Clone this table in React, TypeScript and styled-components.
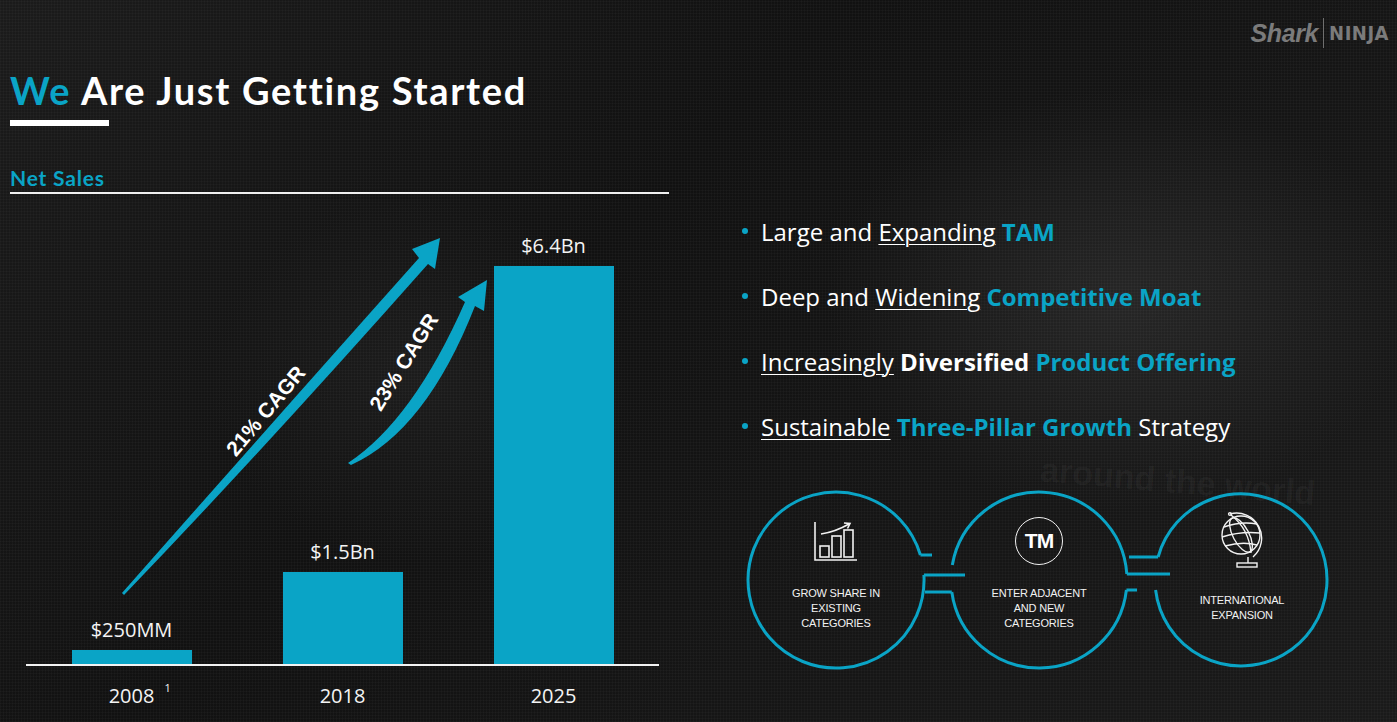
import React from "react";
import styled, { createGlobalStyle } from "styled-components";

const TEAL = "#0aa4c6";

const GlobalStyle = createGlobalStyle`
  html, body {
    margin: 0;
    padding: 0;
    background: #121212;
  }
  * {
    box-sizing: border-box;
  }
`;

const bars = [
  { year: "2008", label: "$250MM", height: 14, note: "1" },
  { year: "2018", label: "$1.5Bn", height: 92 },
  { year: "2025", label: "$6.4Bn", height: 398 },
];

const pillars = [
  { icon: "chart", lines: ["GROW SHARE IN", "EXISTING", "CATEGORIES"] },
  { icon: "tm", lines: ["ENTER ADJACENT", "AND NEW", "CATEGORIES"] },
  { icon: "globe", lines: ["INTERNATIONAL", "EXPANSION"] },
];

const ChartIcon = () => (
  <svg width="46" height="42" viewBox="0 0 46 42" fill="none" stroke="#f2f2f2" strokeWidth="1.6">
    <path d="M2 2 V40 H44" />
    <rect x="7" y="26" width="9" height="11" />
    <rect x="19" y="16" width="9" height="21" />
    <rect x="31" y="10" width="9" height="27" />
    <path d="M8 14 Q22 12 36 4" />
    <path d="M31 3 L37 3.5 L34.5 8.5" />
  </svg>
);

const GlobeIcon = () => (
  <svg width="50" height="60" viewBox="0 0 50 60" fill="none" stroke="#f2f2f2" strokeWidth="1.4">
    <circle cx="24" cy="24" r="19" />
    <ellipse cx="24" cy="24" rx="8" ry="19" transform="rotate(-28 24 24)" />
    <path d="M7 16 Q24 10 40 13" />
    <path d="M5 26 Q24 20 43 22" />
    <path d="M8 35 Q26 30 40 34" />
    <path d="M14 4 Q32 18 34 42" />
    <path d="M13 3 A25 25 0 0 1 36 46" />
    <circle cx="13" cy="3" r="1.4" />
    <path d="M31 46 V52" />
    <rect x="20" y="52" width="20" height="4" />
  </svg>
);

const ArrowLayer = () => (
  <ArrowSvg viewBox="10 193 659 520">
    <path
      d="M122 592 Q256 440 419 257 L412 248 L440 237 L435 268 L428 263 Q266 446 124 594 Z"
      fill={TEAL}
    />
    <path
      d="M348 462 Q413 419 465 301 L458 296 L487 279 L484 310 L475 305 Q426 430 351 464 Z"
      fill={TEAL}
    />
    <CagrText x="266" y="417" transform="rotate(-50 266 410)">
      21% CAGR
    </CagrText>
    <CagrText x="404" y="368" transform="rotate(-58 404 361)">
      23% CAGR
    </CagrText>
  </ArrowSvg>
);

const RingLayer = () => (
  <RingSvg viewBox="747 491 580 178">
    <g fill="none" stroke={TEAL} strokeWidth="3">
      <path d="M920.4 555 A88 88 0 1 0 923.9 575" />
      <path d="M920.4 555 L932 555" />
      <path d="M923.9 575 L965 575" />
      <path d="M952.3 565 A88 88 0 0 1 1126.8 574" />
      <path d="M951.8 592 A88 88 0 0 0 1126.4 590" />
      <path d="M951.8 592 L925 592" />
      <path d="M1126.8 574 L1170 574" />
      <path d="M1126.4 590 L1137 590" />
      <path d="M1158.1 557 A86 86 0 1 1 1155.6 590" />
      <path d="M1158.1 557 L1129 557" />
    </g>
  </RingSvg>
);

const App: React.FC = () => {
  return (
    <>
      <GlobalStyle />
      <Slide>
        <Backdrop>around the world</Backdrop>
        <LeftColumn>
          <Title>
            <TitleAccent>We</TitleAccent> Are Just Getting Started
          </Title>
          <TitleBar />
          <SectionLabel>Net Sales</SectionLabel>
          <SectionRule />
          <Chart>
            <Plot>
              {bars.map((b) => (
                <BarColumn key={b.year}>
                  <BarLabel>{b.label}</BarLabel>
                  <Bar style={{ height: b.height }} />
                </BarColumn>
              ))}
            </Plot>
            <YearRow>
              {bars.map((b) => (
                <Year key={b.year}>
                  {b.year}
                  {b.note && <Note>{b.note}</Note>}
                </Year>
              ))}
            </YearRow>
            <ArrowLayer />
          </Chart>
        </LeftColumn>

        <RightColumn>
          <LogoRow>
            <LogoShark>Shark</LogoShark>
            <LogoDivider />
            <LogoNinja>NINJA</LogoNinja>
          </LogoRow>

          <Bullets>
            <BulletItem>
              <Plain>Large and </Plain>
              <Under>Expanding</Under>
              <Accent> TAM</Accent>
            </BulletItem>
            <BulletItem>
              <Plain>Deep and </Plain>
              <Under>Widening</Under>
              <Accent> Competitive Moat</Accent>
            </BulletItem>
            <BulletItem>
              <Under>Increasingly</Under>
              <Strong> Diversified</Strong>
              <Accent> Product Offering</Accent>
            </BulletItem>
            <BulletItem>
              <Under>Sustainable</Under>
              <Accent> Three-Pillar Growth</Accent>
              <Plain> Strategy</Plain>
            </BulletItem>
          </Bullets>

          <Pillars>
            <RingLayer />
            {pillars.map((p) => (
              <Pillar key={p.lines[0]}>
                <PillarIcon>
                  {p.icon === "chart" && <ChartIcon />}
                  {p.icon === "tm" && <TmBadge>TM</TmBadge>}
                  {p.icon === "globe" && <GlobeIcon />}
                </PillarIcon>
                <PillarLabel>
                  {p.lines.map((l) => (
                    <span key={l}>{l}</span>
                  ))}
                </PillarLabel>
              </Pillar>
            ))}
          </Pillars>
        </RightColumn>
      </Slide>
    </>
  );
};

const Slide = styled.div`
  position: relative;
  width: 1397px;
  height: 722px;
  overflow: hidden;
  display: grid;
  grid-template-columns: 680px 1fr;
  color: #fff;
  background-color: #151515;
  background-image: repeating-linear-gradient(
      0deg,
      rgba(255, 255, 255, 0.025) 0 1px,
      transparent 1px 3px
    ),
    repeating-linear-gradient(90deg, rgba(255, 255, 255, 0.025) 0 1px, transparent 1px 3px),
    radial-gradient(ellipse 420px 300px at 1120px 300px, rgba(70, 70, 70, 0.35), transparent 70%),
    radial-gradient(ellipse 300px 260px at 420px 380px, rgba(60, 60, 60, 0.25), transparent 70%),
    linear-gradient(135deg, #1b1b1b 0%, #111 40%, #1a1a1a 100%);
`;

const Backdrop = styled.div`
  position: absolute;
  left: 1040px;
  top: 462px;
  font-family: "Liberation Sans", Arial, sans-serif;
  font-weight: 700;
  font-size: 34px;
  color: rgba(255, 255, 255, 0.045);
  transform: rotate(5deg);
  white-space: nowrap;
  pointer-events: none;
`;

const LeftColumn = styled.div`
  padding: 68px 0 0 10px;
  display: flex;
  flex-direction: column;
  position: relative;
`;

const Title = styled.h1`
  margin: 0;
  font-family: "Lato", "Open Sans", sans-serif;
  font-weight: 700;
  font-size: 38px;
  line-height: 44px;
  letter-spacing: 1.7px;
  color: #fff;
  white-space: nowrap;
`;

const TitleAccent = styled.span`
  color: ${TEAL};
`;

const TitleBar = styled.div`
  margin-top: 8px;
  width: 99px;
  height: 6px;
  background: #fff;
`;

const SectionLabel = styled.div`
  margin-top: 41px;
  font-family: "Lato", "Open Sans", sans-serif;
  font-weight: 700;
  font-size: 21px;
  line-height: 22px;
  letter-spacing: 0.8px;
  color: ${TEAL};
`;

const SectionRule = styled.div`
  margin-top: 3px;
  width: 659px;
  height: 2px;
  background: #f0f0f0;
`;

const Chart = styled.div`
  position: relative;
  width: 659px;
`;

const Plot = styled.div`
  margin-left: 16px;
  width: 633px;
  height: 472px;
  display: grid;
  grid-template-columns: repeat(3, 211px);
  align-items: end;
  border-bottom: 2px solid #f2f2f2;
`;

const BarColumn = styled.div`
  display: flex;
  flex-direction: column;
  align-items: center;
  justify-content: flex-end;
`;

const BarLabel = styled.div`
  font-family: "Open Sans", sans-serif;
  font-size: 20px;
  line-height: 24px;
  margin-bottom: 8px;
  color: #f4f4f4;
`;

const Bar = styled.div`
  width: 120px;
  background: ${TEAL};
`;

const YearRow = styled.div`
  margin-left: 16px;
  margin-top: 18px;
  width: 633px;
  display: grid;
  grid-template-columns: repeat(3, 211px);
`;

const Year = styled.div`
  position: relative;
  text-align: center;
  font-family: "Open Sans", sans-serif;
  font-size: 20px;
  line-height: 24px;
  color: #f4f4f4;
`;

const Note = styled.sup`
  position: absolute;
  margin-left: 10px;
  top: -8px;
  font-size: 11px;
`;

const ArrowSvg = styled.svg`
  position: absolute;
  left: 0;
  top: 0;
  width: 659px;
  height: 520px;
  overflow: visible;
  pointer-events: none;
`;

const CagrText = styled.text`
  font-family: "Liberation Sans", Arial, sans-serif;
  font-weight: 700;
  font-size: 21px;
  fill: #fff;
  text-anchor: middle;
`;

const RightColumn = styled.div`
  display: flex;
  flex-direction: column;
  position: relative;
`;

const LogoRow = styled.div`
  display: flex;
  justify-content: flex-end;
  align-items: center;
  gap: 5px;
  padding: 18px 8px 0 0;
  height: 48px;
`;

const LogoShark = styled.span`
  font-family: "Liberation Sans", Arial, sans-serif;
  font-style: italic;
  font-weight: 700;
  font-size: 25px;
  letter-spacing: -0.4px;
  color: #7b7b7b;
`;

const LogoDivider = styled.span`
  width: 1px;
  height: 30px;
  background: #6f6f6f;
`;

const LogoNinja = styled.span`
  font-family: "DejaVu Sans Condensed", "DejaVu Sans", sans-serif;
  font-stretch: condensed;
  font-weight: 700;
  font-size: 20px;
  letter-spacing: 0.5px;
  color: #7b7b7b;
`;

const Bullets = styled.ul`
  list-style: none;
  margin: 151px 0 0 62px;
  padding: 0;
  display: flex;
  flex-direction: column;
`;

const BulletItem = styled.li`
  position: relative;
  height: 65px;
  line-height: 65px;
  padding-left: 19px;
  font-family: "Open Sans", sans-serif;
  font-size: 24px;
  letter-spacing: 0px;
  white-space: nowrap;
  color: #fff;

  &::before {
    content: "";
    position: absolute;
    left: 0;
    top: 29px;
    width: 6px;
    height: 6px;
    border-radius: 50%;
    background: ${TEAL};
  }
`;

const Plain = styled.span`
  color: #fff;
`;

const Under = styled.span`
  color: #fff;
  text-decoration: underline;
  text-decoration-thickness: 1px;
  text-underline-offset: 3px;
`;

const Accent = styled.span`
  color: ${TEAL};
  font-weight: 700;
`;

const Strong = styled.span`
  color: #fff;
  font-weight: 700;
`;

const Pillars = styled.div`
  position: relative;
  margin: 32px 0 0 67px;
  width: 580px;
  height: 178px;
  display: grid;
  grid-template-columns: repeat(3, 178px);
  column-gap: 25px;
`;

const RingSvg = styled.svg`
  position: absolute;
  left: 0;
  top: 0;
  width: 580px;
  height: 178px;
  overflow: visible;
  pointer-events: none;
`;

const Pillar = styled.div`
  position: relative;
  display: flex;
  flex-direction: column;
  align-items: center;
  padding-top: 17px;
`;

const PillarIcon = styled.div`
  height: 66px;
  display: flex;
  align-items: center;
  justify-content: center;
`;

const TmBadge = styled.div`
  width: 48px;
  height: 48px;
  border: 1.5px solid #f2f2f2;
  border-radius: 50%;
  display: flex;
  align-items: center;
  justify-content: center;
  font-family: "Liberation Sans", Arial, sans-serif;
  font-weight: 700;
  font-size: 21px;
  letter-spacing: -1px;
  color: #fff;
`;

const PillarLabel = styled.div`
  margin-top: 9px;
  height: 50px;
  display: flex;
  flex-direction: column;
  align-items: center;
  justify-content: center;
  font-family: "Liberation Sans", Arial, sans-serif;
  font-size: 11px;
  line-height: 15px;
  letter-spacing: -0.2px;
  color: #f2f2f2;
`;

export default App;
